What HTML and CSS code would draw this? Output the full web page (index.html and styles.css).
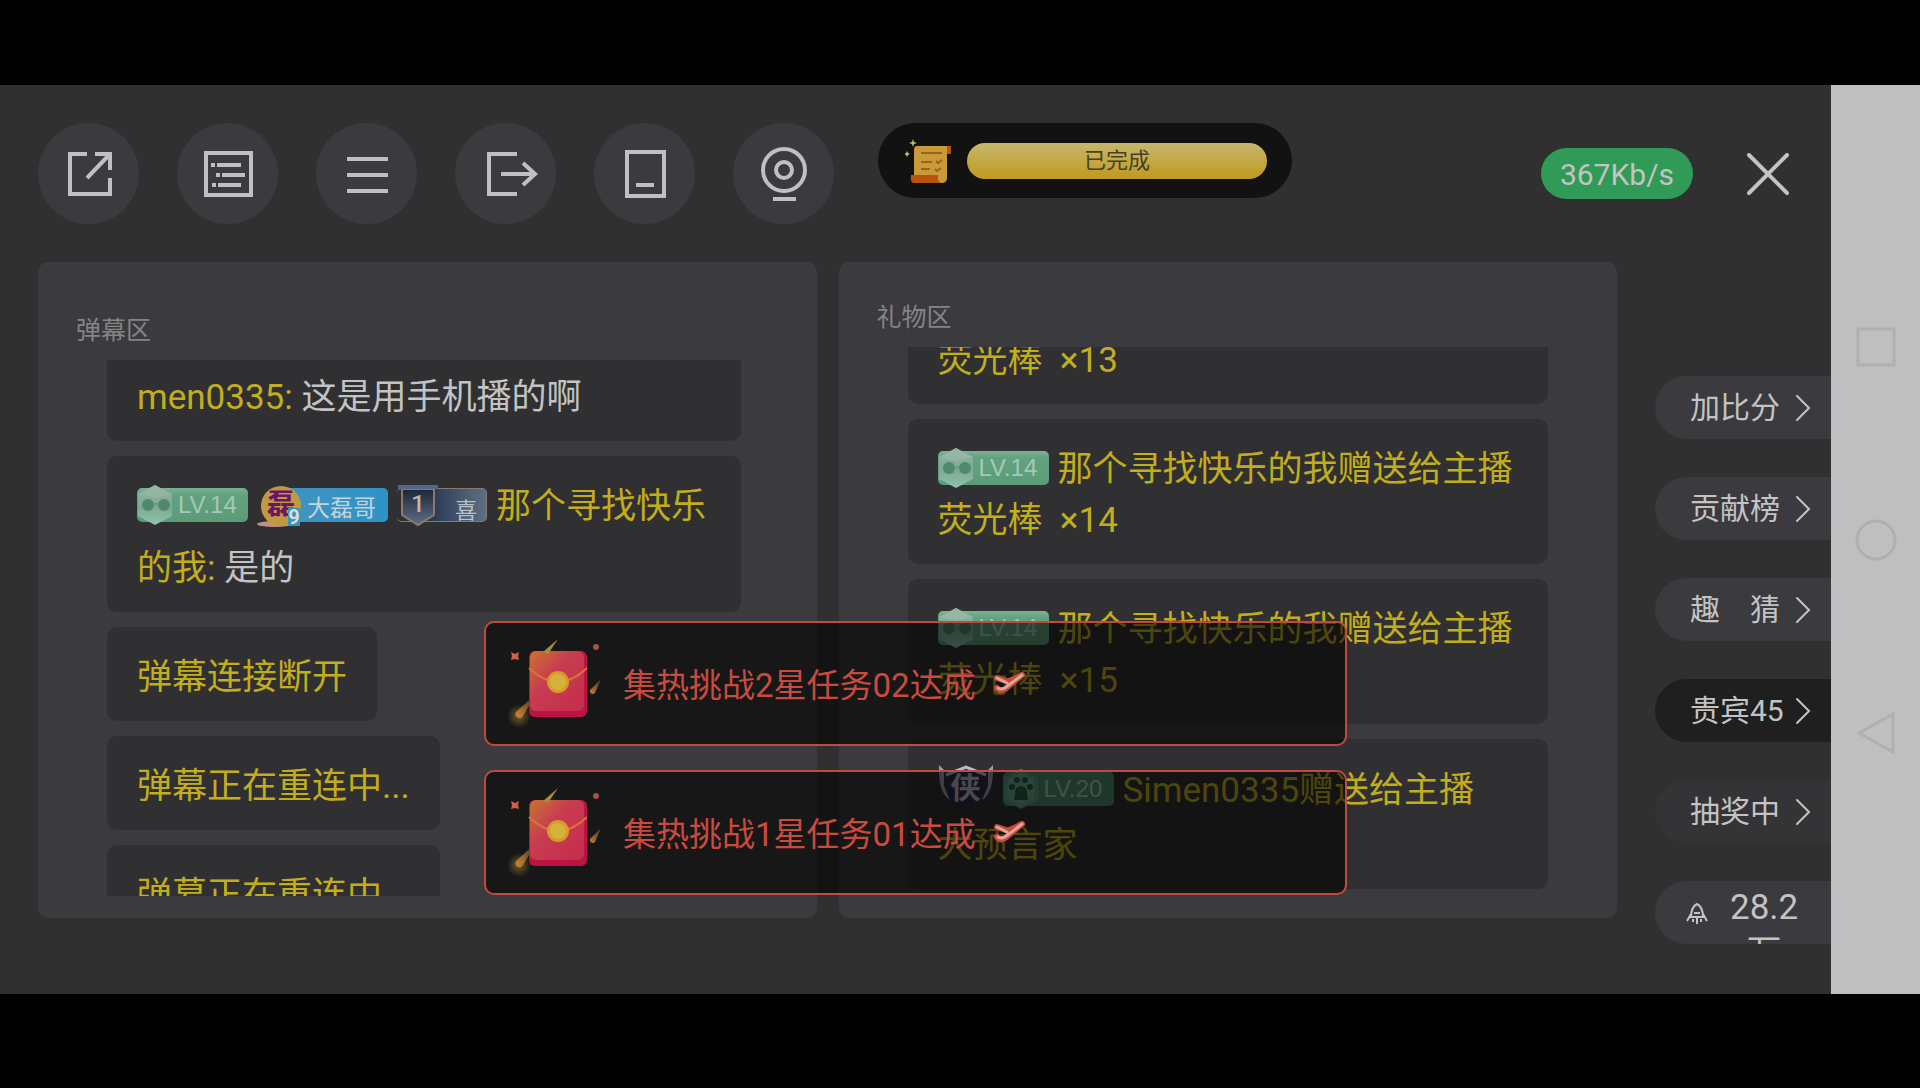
FILE: index.html
```html
<!DOCTYPE html>
<html lang="zh-CN">
<head>
<meta charset="UTF-8">
<title>直播助手</title>
<link rel="stylesheet" href="styles.css">
</head>
<body>
<!-- shared icons -->
<svg class="defs" aria-hidden="true">
  <defs>
    <linearGradient id="g_hex" x1="0" y1="0" x2="0" y2="1">
      <stop offset="0" stop-color="#8fb5a3"/><stop offset=".55" stop-color="#7da995"/><stop offset="1" stop-color="#8fc4ac"/>
    </linearGradient>
    <linearGradient id="g_env" x1="0" y1="0" x2="1" y2="1">
      <stop offset="0" stop-color="#c8752f"/><stop offset=".4" stop-color="#c83c50"/><stop offset="1" stop-color="#c52c4c"/>
    </linearGradient>
    <linearGradient id="g_shield" x1="0" y1="0" x2="0" y2="1">
      <stop offset="0" stop-color="#1b2638"/><stop offset="1" stop-color="#5f6f88"/>
    </linearGradient>
    <linearGradient id="g_tail" x1="1" y1="0" x2="0" y2="1">
      <stop offset="0" stop-color="#8a6a2a" stop-opacity=".4"/><stop offset="1" stop-color="#cc8238"/>
    </linearGradient>
    <radialGradient id="g_glow">
      <stop offset="0" stop-color="#b08a30" stop-opacity=".6"/><stop offset="1" stop-color="#b08a30" stop-opacity="0"/>
    </radialGradient>
    <symbol id="hex" viewBox="0 0 36 42">
      <path d="M18 1 35 10V32L18 41 1 32V10Z" fill="url(#g_hex)"/>
      <path d="M1 10 18 1 35 10 18 14Z" fill="#9dbbab" opacity=".5"/>
      <circle cx="11" cy="21" r="6" fill="#4f8a6c"/>
      <circle cx="27" cy="21" r="6" fill="#4f8a6c"/>
      <path d="M16 20h5" stroke="#6a9c83" stroke-width="2"/>
    </symbol>
    <symbol id="hexpaw" viewBox="0 0 36 42">
      <path d="M18 1 35 10V32L18 41 1 32V10Z" fill="#5d9c80"/>
      <path d="M18 5 31 12V30L18 37 5 30V12Z" fill="#6fa98e"/>
      <g fill="#2b5a45"><circle cx="18" cy="24" r="6"/><circle cx="9" cy="19" r="3"/><circle cx="14" cy="12" r="3"/><circle cx="22" cy="12" r="3"/><circle cx="27" cy="19" r="3"/><path d="M12 25h12l1 7H11Z"/></g>
    </symbol>
    <symbol id="envelope" viewBox="0 -5 94 96">
      <path d="M3 12l4 2 4-2-1 4 1 4-4-1-4 1 1-4Z" fill="#d0604a"/>
      <circle cx="88" cy="7" r="3" fill="#a3543f"/>
      <circle cx="11" cy="76" r="12" fill="url(#g_glow)"/>
      <path d="M28 54 15 76a4 4 0 0 1-7-4Z" fill="url(#g_tail)"/>
      <path d="M93 39 87 53a3 3 0 0 1-5-3Z" fill="url(#g_tail)"/>
      <rect x="21" y="11" width="58" height="66" rx="6" fill="#bd1340"/>
      <rect x="22" y="11" width="54" height="60" rx="6" fill="url(#g_env)"/>
      <path d="M21 28Q50 56 79 28" fill="none" stroke="#d9703c" stroke-width="2"/>
      <path d="M50 -1 40 14 35 12Z" fill="#a98b34"/>
      <circle cx="50" cy="42" r="11" fill="#d99a2c"/>
      <circle cx="50" cy="42" r="8" fill="#d6b23c"/>
    </symbol>
    <symbol id="tick" viewBox="0 0 34 22">
      <g fill="none" stroke-linecap="round" stroke-linejoin="round">
        <path d="M4 6 13 9Q16 10 29 3M29 3 12 17Q7 20 4 16" stroke="#c9483c" stroke-width="6"/>
        <path d="M4 6 14 11M29 3 12 16Q8 18 5 16" stroke="#dba69b" stroke-width="3"/>
      </g>
    </symbol>
    <symbol id="arrow" viewBox="0 0 16 28">
      <path d="M2 2 14 14 2 26" fill="none" stroke="#c3c3c3" stroke-width="2" stroke-linecap="round"/>
    </symbol>
  </defs>
</svg>

<div class="screen">
  <main class="app">
    <header class="toolbar">
      <div class="tools">
        <button class="tool" type="button" aria-label="分享">
          <svg viewBox="0 0 52 52"><path d="M24 6H7v40h40V30M32 6h15v16M47 6 24 30"/></svg>
        </button>
        <button class="tool" type="button" aria-label="列表">
          <svg viewBox="0 0 52 52"><path d="M4 5h45v42H4ZM9 17h4M15 17h24M14 27h4M20 27h23M10 37h4M16 37h23"/></svg>
        </button>
        <button class="tool" type="button" aria-label="菜单">
          <svg viewBox="0 0 52 52"><path d="M6 11h41M6 27h41M6 43h41"/></svg>
        </button>
        <button class="tool" type="button" aria-label="退出">
          <svg viewBox="0 0 52 52"><path d="M37 6H9v40h28M21 26h33M43 15l12 11-12 11"/></svg>
        </button>
        <button class="tool" type="button" aria-label="手机">
          <svg viewBox="0 0 52 52"><path d="M8 4h37v44H8ZM17 37h18"/></svg>
        </button>
        <button class="tool" type="button" aria-label="摄像头">
          <svg viewBox="0 0 52 52"><circle cx="26" cy="22" r="21"/><circle cx="26" cy="22" r="8"/><path d="M15 51h23"/></svg>
        </button>
      </div>

      <div class="task">
        <svg class="task-icon" viewBox="0 0 48 46" aria-hidden="true">
          <path d="M8 1l1 3 3 1-3 1-1 3-1-3-3-1 3-1ZM2 13l1 2 2 1-2 1-1 2-1-2-2-1 2-1Z" fill="#cdb768"/>
          <path d="M40 8h6v8h-5Z" fill="#b8560e"/>
          <path d="M12 8h29q2 0 1 4V40q0 4-4 5H14l-5-6V12q0-4 3-4Z" fill="#c99a3a"/>
          <path d="M16 15h21M16 24h11M16 31h9M31 23l2 2 4-3M30 31l2 2 4-3" fill="none" stroke="#9a6418" stroke-width="2"/>
          <path d="M6 37h27v5l3 3H9q-4 0-3-8Z" fill="#b8540e"/>
        </svg>
        <div class="task-bar">已完成</div>
      </div>

      <span class="speed">367Kb/s</span>
      <button class="close" type="button" aria-label="关闭">
        <svg viewBox="0 0 42 42"><path d="M2 2 40 40M40 2 2 40"/></svg>
      </button>
    </header>

    <div class="content">
      <section class="panel chat">
        <h2>弹幕区</h2>
        <ul class="list">
          <li><span class="name">men0335:</span> 这是用手机播的啊</li>
          <li>
            <span class="lv"><svg><use href="#hex"/></svg>LV.14</span><span class="fan"><span class="fan-face">磊</span><span class="fan-num">9</span>大磊哥</span><span class="guard"><svg viewBox="0 0 42 44"><path d="M5 6h32v26L21 42 5 32Z" fill="url(#g_shield)" stroke="#8f7966" stroke-width="2"/><path d="M1 2h40v4H1Z" fill="#53698a"/></svg><b>1</b>喜</span><span class="name">那个寻找快乐的我:</span> 是的
          </li>
          <li class="name">弹幕连接断开</li>
          <li class="name">弹幕正在重连中...</li>
          <li class="name">弹幕正在重连中...</li>
        </ul>
      </section>

      <section class="panel gifts">
        <h2>礼物区</h2>
        <ul class="list">
          <li><span class="lv"><svg><use href="#hex"/></svg>LV.14</span>那个寻找快乐的我赠送给主播<br>荧光棒&nbsp; ×13</li>
          <li><span class="lv"><svg><use href="#hex"/></svg>LV.14</span>那个寻找快乐的我赠送给主播<br>荧光棒&nbsp; ×14</li>
          <li><span class="lv"><svg><use href="#hex"/></svg>LV.14</span>那个寻找快乐的我赠送给主播<br>荧光棒&nbsp; ×15</li>
          <li><span class="hero"><svg viewBox="0 0 56 47"><path d="M28 2 48 10V32Q42 42 28 46 14 42 8 32V10Z" fill="#2b2b45"/><path d="M8 11 28 3 48 11" fill="none" stroke="#b9bad0" stroke-width="3"/><path d="M1 1 6 6V22L12 36Q0 29 1 1ZM55 1 50 6V22L44 36Q56 29 55 1Z" fill="#9a9bb0"/></svg><b>侠</b></span><span class="lv lv-dark"><svg><use href="#hexpaw"/></svg>LV.20</span>Simen0335赠送给主播<br>大预言家</li>
        </ul>
      </section>

      <nav class="side">
        <button type="button">加比分<svg><use href="#arrow"/></svg></button>
        <button type="button">贡献榜<svg><use href="#arrow"/></svg></button>
        <button type="button">趣　猜<svg><use href="#arrow"/></svg></button>
        <button type="button" class="on">贵宾45<svg><use href="#arrow"/></svg></button>
        <button type="button" class="dim">抽奖中<svg><use href="#arrow"/></svg></button>
        <button type="button" class="heat">
          <svg viewBox="0 0 22 22"><path d="M5 15Q5 5 11 2 17 5 17 15ZM5 12 1 19M17 12l4 7M8 11h6M7 17v3M11 15v7M15 17v3"/></svg>
          <span>28.2<br>万</span>
        </button>
      </nav>
    </div>

    <div class="toasts">
      <div class="toast">
        <svg class="envelope"><use href="#envelope"/></svg>
        集热挑战2星任务02达成
        <svg class="tick"><use href="#tick"/></svg>
      </div>
      <div class="toast">
        <svg class="envelope"><use href="#envelope"/></svg>
        集热挑战1星任务01达成
        <svg class="tick"><use href="#tick"/></svg>
      </div>
    </div>
  </main>

  <!-- phone navigation keys -->
  <div class="keys">
    <button type="button" aria-label="最近任务"><svg viewBox="0 0 42 42"><path d="M3 3h36v36H3Z"/></svg></button>
    <button type="button" aria-label="主屏幕"><svg viewBox="0 0 42 42"><circle cx="21" cy="21" r="19"/></svg></button>
    <button type="button" aria-label="返回"><svg viewBox="0 0 42 42"><path d="M38 2v38L4 21Z"/></svg></button>
  </div>
</div>
</body>
</html>
```
FILE: styles.css
```css
* { box-sizing: border-box; }
body {
display: flex;
height: 100vh;
margin: 0;
padding: 85px 0 94px;
background: #000;
color: #c3c3c3;
font-family: Roboto, "Noto Sans CJK SC", sans-serif;
overflow: hidden;
}
button {
border: 0;
padding: 0;
background: none;
color: inherit;
font-family: inherit;
cursor: pointer;
}
.defs { position: absolute; width: 0; height: 0; }
.screen { display: flex; flex: 1; min-width: 0; }
.app {
position: relative;
display: flex;
flex-direction: column;
flex: 1;
min-width: 0;
padding: 38px 0 76px 38px;
background: #303030;
}

/* top bar */
.toolbar {
display: flex;
align-items: center;
margin-bottom: 38px;
padding-right: 42px;
}
.tools { display: flex; gap: 38px; }
.tool {
display: flex;
align-items: center;
justify-content: center;
width: 101px;
height: 101px;
border-radius: 50%;
background: #3b3a3e;
}
.tool svg {
width: 52px;
height: 52px;
overflow: visible;
fill: none;
stroke: #c0c0c2;
stroke-width: 4;
}
.task {
display: flex;
align-items: center;
align-self: flex-start;
gap: 14px;
height: 75px;
margin-left: 44px;
padding: 0 25px 0 27px;
border-radius: 38px;
background: #121212;
}
.task-icon { width: 48px; height: 46px; }
.task-bar {
width: 300px;
border-radius: 18px;
background: linear-gradient(#c6b76c, #c09a1f);
color: #484023;
font-size: 22px;
line-height: 36px;
text-align: center;
}
.speed {
margin-left: auto;
padding: 2px 19px 0;
border-radius: 26px;
background: #2f9b56;
font-size: 30px;
line-height: 49px;
}
.close { width: 42px; height: 42px; margin-left: 54px; }
.close svg {
display: block;
fill: none;
stroke: #c3c3c3;
stroke-width: 4;
stroke-linecap: round;
}

/* panels */
.content {
display: grid;
grid-template-columns: 1fr 1fr 192px;
grid-template-rows: minmax(0, 1fr);
column-gap: 22px;
flex: 1;
min-height: 0;
}
.panel {
display: flex;
flex-direction: column;
min-width: 0;
border-radius: 10px;
background: #3b3a3e;
}
.panel h2 {
margin: 0 0 15px 38px;
color: #848486;
font-size: 25px;
font-weight: normal;
line-height: 28px;
}
.chat { padding: 55px 76px 22px 0; }
.gifts { padding: 42px 69px 22px 0; }
.list {
display: flex;
flex-direction: column;
align-items: flex-start;
gap: 15px;
flex: 1;
min-height: 0;
margin: 0 0 0 69px;
padding: 0;
list-style: none;
overflow: hidden;
}
.list li {
flex: none;
border-radius: 10px;
background: #303032;
font-size: 35px;
}
.chat li { padding: 20px 30px 12px; line-height: 62px; }
.chat li:first-child { width: 100%; margin-top: -13px; }
.gifts li {
width: 100%;
padding: 25px 30px 18px;
color: #c2ad1c;
line-height: 51px;
}
.gifts li:first-child { margin-top: -88px; }
.list .name { color: #c2ad1c; }

/* badges */
.lv, .fan, .guard {
position: relative;
display: inline-block;
height: 34px;
margin: 0 9px 8px 0;
border-radius: 5px;
vertical-align: middle;
}
.lv {
width: 111px;
padding-left: 41px;
background: linear-gradient(#7fb096 0, #62a37f 20%, #5c9b78);
color: #a5c9b6;
font-family: "Liberation Sans", sans-serif;
font-size: 24px;
line-height: 34px;
}
.lv svg {
position: absolute;
left: 0;
top: -4px;
width: 36px;
height: 42px;
}
.lv-dark { background: #4d8a6d; }
.fan {
width: 131px;
padding-left: 50px;
background: linear-gradient(90deg, transparent 20px, #4593bd 20px, #2e93c8);
color: #c3d3dc;
font-size: 23px;
line-height: 42px;
}
.fan-face {
position: absolute;
left: 4px;
top: -2px;
width: 40px;
height: 40px;
border-radius: 50%;
background: #c09a42;
color: #6d1468;
font-size: 28px;
font-weight: bold;
line-height: 38px;
text-align: center;
}
.fan::before {
content: "";
position: absolute;
left: 0;
bottom: -5px;
width: 36px;
height: 6px;
border-radius: 50%;
background: #c48f80;
}
.fan-num {
position: absolute;
left: 31px;
bottom: -4px;
width: 12px;
background: #3795bd;
color: #d5dde0;
font-size: 20px;
font-weight: bold;
line-height: 18px;
text-align: center;
}
.guard {
width: 90px;
padding-left: 58px;
border: 1px solid #8b786c;
border-left: 0;
background: linear-gradient(90deg, transparent 20px, #1e2c47 20px, #5d6f85);
color: #b9c1cb;
font-size: 22px;
line-height: 44px;
}
.guard svg {
position: absolute;
left: 0;
top: -6px;
width: 42px;
height: 44px;
}
.guard b {
position: absolute;
left: 0;
top: -2px;
width: 42px;
color: #c5b29f;
font-size: 24px;
font-weight: 500;
line-height: 34px;
text-align: center;
}
.hero {
position: relative;
display: inline-block;
width: 56px;
height: 47px;
margin: 0 9px 9px 0;
vertical-align: -18px;
}
.hero svg { display: block; width: 56px; height: 47px; }
.hero b {
position: absolute;
left: 0;
top: 4px;
width: 56px;
color: #b5b5c0;
font-size: 30px;
line-height: 40px;
text-align: center;
}

/* right hand menu */
.side {
display: flex;
flex-direction: column;
gap: 38px;
padding: 114px 0 0 16px;
}
.side button {
display: flex;
align-items: center;
justify-content: space-between;
flex: none;
height: 63px;
padding: 0 20px 0 35px;
border-radius: 32px 0 0 32px;
background: #3b3a3e;
font-size: 30px;
line-height: 36px;
white-space: nowrap;
}
.side svg { width: 16px; height: 28px; }
.side .on { background: #1f1f1f; }
.side .dim { background: #343437; }
.side .heat {
align-items: flex-start;
justify-content: flex-start;
gap: 22px;
padding: 4px 0 0 31px;
font-size: 35px;
line-height: 46px;
overflow: hidden;
}
.side .heat svg {
width: 22px;
height: 22px;
margin-top: 17px;
fill: none;
stroke: #c3c3c3;
stroke-width: 2;
}

/* task messages over the panels */
.toasts {
position: absolute;
left: 484px;
right: 484px;
bottom: 99px;
display: flex;
flex-direction: column;
gap: 24px;
}
.toast {
display: flex;
align-items: center;
height: 125px;
padding: 0 0 2px 22px;
border: 2px solid #c04a3f;
border-radius: 10px;
background: rgba(0, 0, 0, .6);
color: #c94b3e;
font-size: 33px;
white-space: nowrap;
}
.envelope { width: 94px; height: 96px; margin-right: 21px; }
.tick { width: 34px; height: 22px; margin-left: 17px; }

.keys {
display: flex;
flex-direction: column;
align-items: center;
justify-content: center;
gap: 151px;
width: 89px;
background: #bfbfbf;
}
.keys button { width: 42px; height: 42px; }
.keys svg {
display: block;
fill: none;
stroke: #b0b0b0;
stroke-width: 3;
}
```
